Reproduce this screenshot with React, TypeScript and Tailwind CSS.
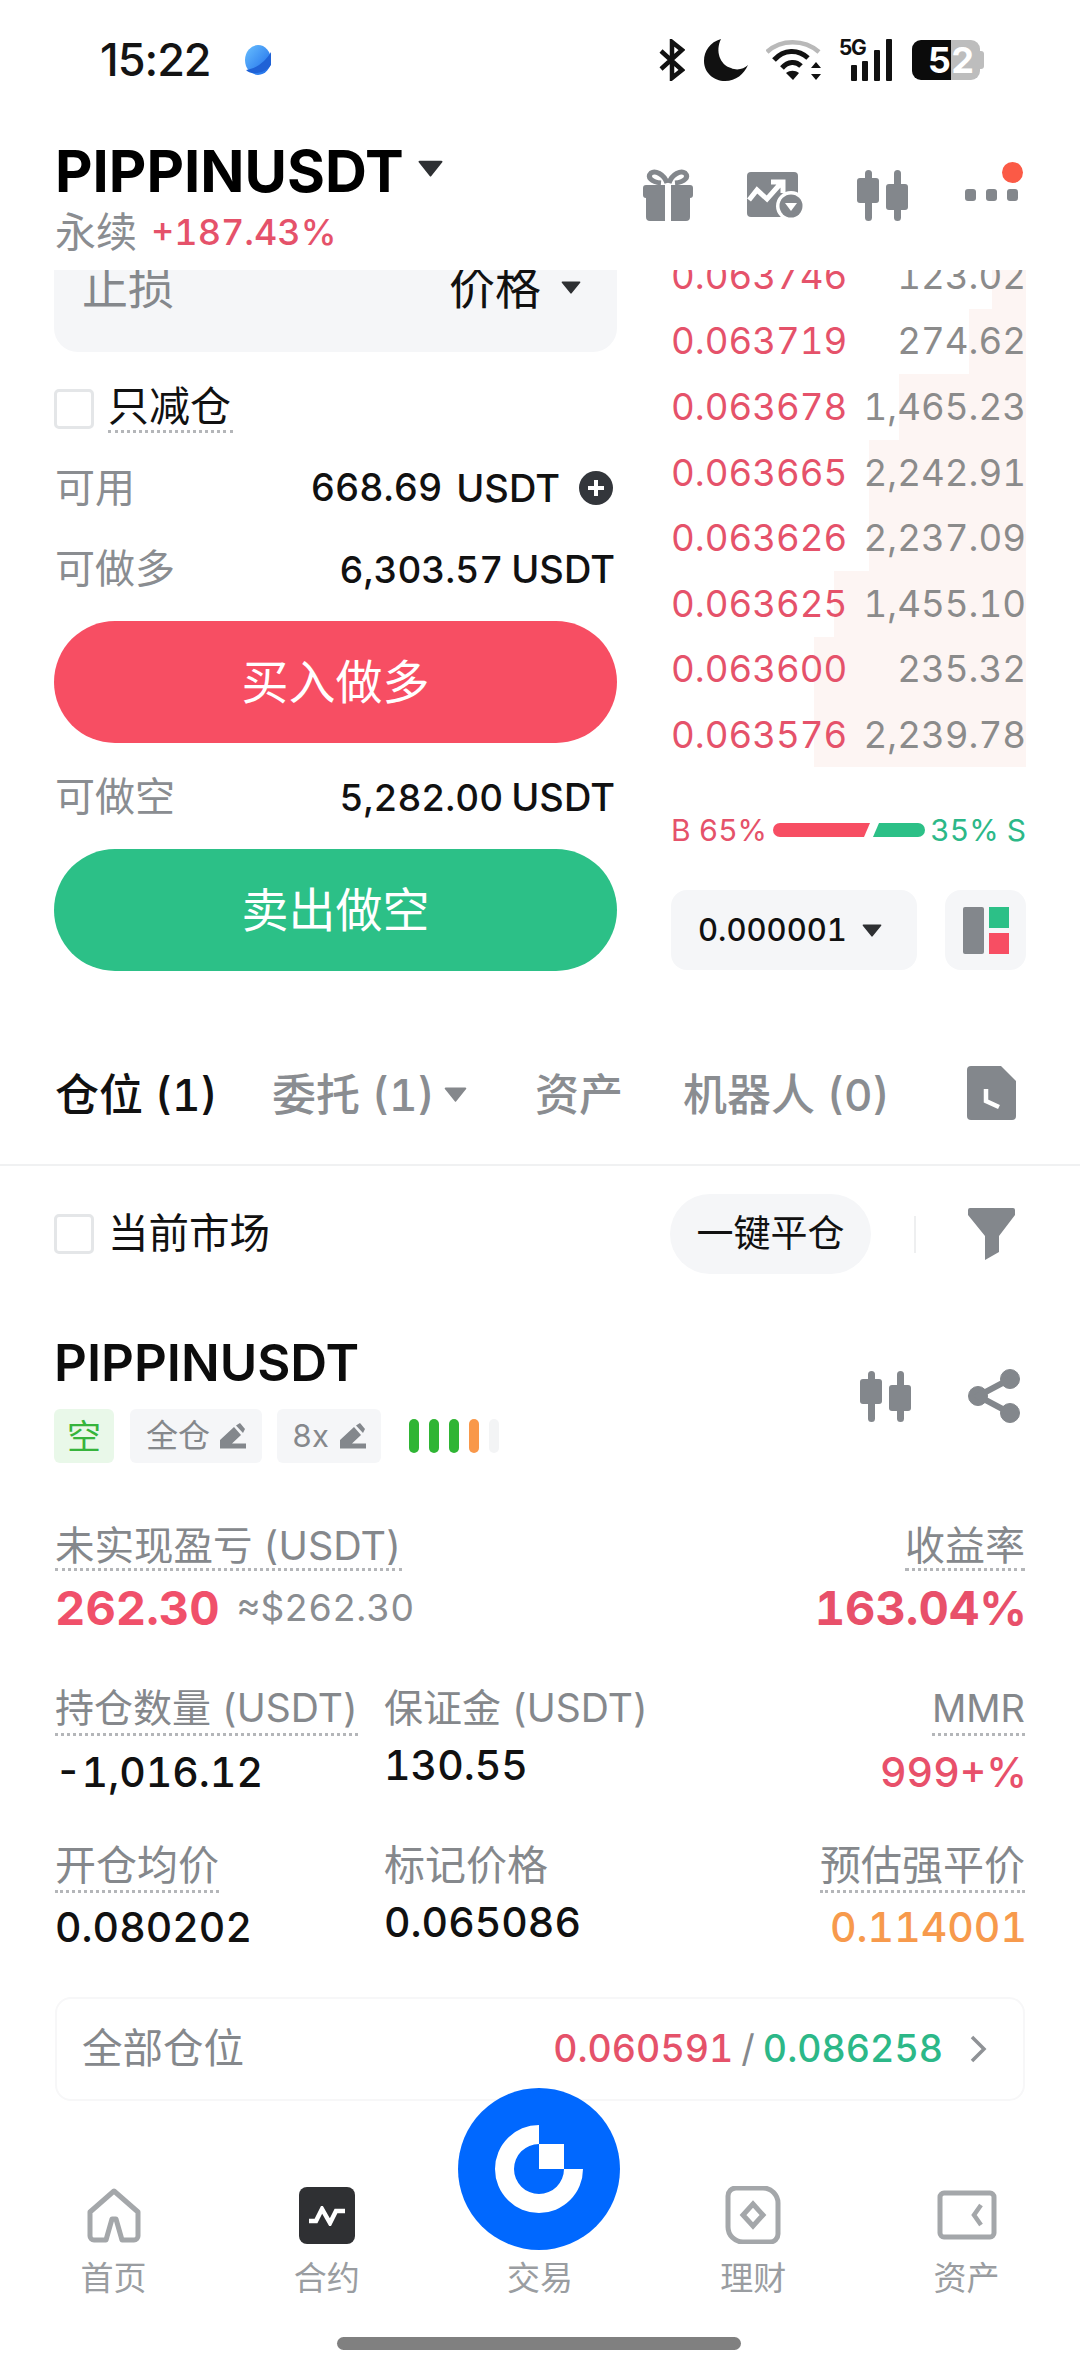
const FONT = 'font-["Inter","Noto_Sans_CJK_SC",sans-serif]';

function Tri({ cls }: { cls: string }) {
  return (
    <svg viewBox="0 0 24 16" className={cls} fill="currentColor">
      <path d="M1.5 0.5h21a1 1 0 0 1 .8 1.6L12.8 15.2a1 1 0 0 1-1.6 0L.7 2.100A1 1 0 0 1 1.500.5z" />
    </svg>
  );
}

function Candles({ cls }: { cls: string }) {
  return (
    <svg viewBox="0 0 51 51" className={cls} fill="#83878c">
      <rect x="8" y="0" width="7" height="51" rx="3.500" />
      <rect x="0" y="8" width="22" height="25" rx="3" />
      <rect x="37" y="0" width="7" height="51" rx="3.500" />
      <rect x="29" y="14" width="22" height="26" rx="3" />
    </svg>
  );
}

function Pencil() {
  return (
    <svg viewBox="0 0 26 26" className="w-[26px] h-[26px]" fill="#83878c">
      <path d="M0 25.500V17L14 4L21 12L12 20.500H26V25.500Z" />
      <path d="M16 2.500L20 0L25 6L23 10Z" />
    </svg>
  );
}

function Check() {
  return <div className="w-[40px] h-[40px] rounded-[5px] border-[3px] border-[#e4e6e8] bg-white shrink-0" />;
}

function Dot({ children, cls = "" }: { children: React.ReactNode; cls?: string }) {
  return <span className={`inline-block border-b-[3px] border-dotted border-[#b4b6b9] ${cls}`}>{children}</span>;
}

const books: [string, string, string][] = [
  ["0.063746", "123.02", "w-[34px]"],
  ["0.063719", "274.62", "w-[57px]"],
  ["0.063678", "1,465.23", "w-[127px]"],
  ["0.063665", "2,242.91", "w-[157px]"],
  ["0.063626", "2,237.09", "w-[157px]"],
  ["0.063625", "1,455.10", "w-[192px]"],
  ["0.063600", "235.32", "w-[212px]"],
  ["0.063576", "2,239.78", "w-[212px]"],
];

function BookRow({ p, a, w }: { p: string; a: string; w: string }) {
  return (
    <div className="relative h-[65.6px] flex items-center justify-between">
      <div className={`absolute right-0 top-0 bottom-0 bg-[#fdf5f3] ${w}`} />
      <span className="relative text-[#e5526a]">{p}</span>
      <span className="relative text-[#8b8b8b]">{a}</span>
    </div>
  );
}

function Nav({ label, children }: { label: string; children?: React.ReactNode }) {
  return (
    <div className="w-[213px] flex flex-col items-center">
      <div className="h-[58px] flex items-end justify-center">{children}</div>
      <div className="mt-[12px] text-[33px] leading-[44px] text-[#9a9da1]">{label}</div>
    </div>
  );
}

export default function App() {
  return (
    <div className={`relative w-[1080px] h-[2374px] bg-white overflow-hidden tabular-nums ${FONT}`}>
      {/* status bar */}
      <div className="h-[120px] flex items-center pl-[100px] pr-[94px] justify-between">
        <div className="flex items-center">
          <span className="normal-nums text-[45px] leading-[44px] font-medium text-[#141414] tracking-[-1px] w-[144px]">15:22</span>
          <svg viewBox="0 0 28 30" className="w-[28px] h-[30px]">
            <defs>
              <linearGradient id="gg" x1="0" y1="0" x2="1" y2="1">
                <stop offset="0" stopColor="#69c0ff" />
                <stop offset="1" stopColor="#1967e8" />
              </linearGradient>
            </defs>
            <ellipse cx="14" cy="15" rx="13" ry="15" fill="url(#gg)" />
            <path d="M2 25 C12 24 22 16 27 7 L27 20 C22 28 8 31 2 25z" fill="#1f62d6" />
          </svg>
        </div>
        <div className="flex items-center">
          <svg viewBox="0 0 26 42" className="w-[26px] h-[42px]" fill="none" stroke="#111" strokeWidth="4.500">
            <path d="M2 12L23 31L13 39V3L23 11L2 30" />
          </svg>
          <svg viewBox="0 0 44 42" className="w-[44px] h-[42px] ml-[19px]" fill="#111">
            <path d="M17 0C6 3 0 12 0 22c0 12 10 20 21 20 11 0 19-7 23-16-4 4-11 6-17 3C16 26 11 12 17 0z" />
          </svg>
          <svg viewBox="0 0 56 42" className="w-[56px] h-[42px] ml-[18px]" fill="none">
            <path d="M1 13C15 0 38 0 53 13" stroke="#b9b9b9" strokeWidth="4.500" />
            <path d="M8 21C18 10 32 10 42 19" stroke="#111" strokeWidth="5" />
            <path d="M16 29C22 22 30 22 35 27" stroke="#111" strokeWidth="5" />
            <path d="M20 34L27 41L33 34C29 31 24 31 20 34z" fill="#111" />
            <path d="M50 23l5 6H45zM50 41l5-6H45z" fill="#111" />
          </svg>
          <div className="relative w-[54px] h-[42px] ml-[17px]">
            <span className="absolute left-0 -top-[3px] text-[21px] leading-[24px] font-bold tracking-[-1.500px] text-[#111]">5G</span>
            <svg viewBox="0 0 54 42" className="w-[54px] h-[42px]" fill="#111">
              <rect x="12" y="26" width="6" height="16" rx="1" />
              <rect x="23" y="22" width="6" height="20" rx="1" />
              <rect x="35" y="11" width="6" height="31" rx="1" />
              <rect x="47" y="0" width="6" height="42" rx="1" />
            </svg>
          </div>
          <div className="relative w-[74px] h-[40px] ml-[19px] flex text-[36px] leading-[40px] font-bold text-white">
            <div className="w-[39px] bg-[#0b0b0b] rounded-l-[9px] pl-[16px]">5</div>
            <div className="w-[29px] bg-[#bdbdbd] rounded-r-[9px]">2</div>
            <div className="w-[4px] h-[18px] mt-[11px] bg-[#bdbdbd] rounded-r-[3px]" />
          </div>
        </div>
      </div>

      {/* header */}
      <div className="h-[150px] pl-[55px] pr-[61px] flex items-start justify-between">
        <div>
          <div className="flex items-center h-[60px] mt-[21px]">
            <span className="text-[58px] leading-[60px] font-bold text-black">PIPPINUSDT</span>
            <Tri cls="w-[25px] h-[17px] ml-[14px] -mt-[6px] text-[#2e3033]" />
          </div>
          <div className="flex items-center h-[44px] mt-[9px]">
            <span className="text-[41px] leading-[44px] text-[#8a8d91]">永续</span>
            <span className="ml-[14px] text-[36px] leading-[44px] font-medium text-[#e5526a]">+187.43%</span>
          </div>
        </div>
        <div className="flex items-center mt-[49px] h-[52px]">
          <svg viewBox="0 0 50 52" className="w-[50px] h-[52px]" fill="#83878c">
            <path d="M24 14C21 5 12 1 8 4C4 8 8 13 18 14" fill="none" stroke="#83878c" strokeWidth="5" />
            <path d="M26 14C29 5 38 1 42 4C46 8 42 13 32 14" fill="none" stroke="#83878c" strokeWidth="5" />
            <path d="M3 16H22V29H3a3 3 0 0 1-3-3V19a3 3 0 0 1 3-3zM28 16H47a3 3 0 0 1 3 3V26a3 3 0 0 1-3 3H28z" />
            <path d="M3 29H22V52H7a4 4 0 0 1-4-4zM28 29H47V48a4 4 0 0 1-4 4H28z" />
          </svg>
          <svg viewBox="0 0 56 46" className="w-[56px] h-[46px] ml-[54px]">
            <rect x="0" y="0" width="51" height="45" rx="4" fill="#83878c" />
            <path d="M2 28L10 18L20 27L35 10M24 10H36V21" stroke="#fff" strokeWidth="5" fill="none" />
            <circle cx="44" cy="34" r="15" fill="#fff" />
            <circle cx="44" cy="34" r="11.500" fill="#83878c" />
            <path d="M38 31H50L44 39z" fill="#fff" />
          </svg>
          <Candles cls="w-[51px] h-[51px] ml-[54px]" />
          <div className="relative w-[54px] h-[52px] ml-[57px]">
            <div className="absolute left-0 bottom-[20px] flex gap-[10px]">
              <div className="w-[11px] h-[12px] rounded-[3px] bg-[#83878c]" />
              <div className="w-[11px] h-[12px] rounded-[3px] bg-[#83878c]" />
              <div className="w-[11px] h-[12px] rounded-[3px] bg-[#83878c]" />
            </div>
            <div className="absolute right-[-4px] -top-[7px] w-[21px] h-[21px] rounded-full bg-[#fb5a46]" />
          </div>
        </div>
      </div>

      {/* trade panel */}
      <div className="h-[701px] pl-[54px] flex">
        <div className="w-[563px] shrink-0">
          <div className="h-[82px] bg-[#f5f6f8] rounded-b-[24px] overflow-hidden flex items-start justify-between pl-[28px] pr-[36px]">
            <span className="-mt-[7px] text-[46px] leading-[48px] text-[#85888c]">止损</span>
            <div className="flex items-center -mt-[7px]">
              <span className="text-[46px] leading-[48px] text-[#111]">价格</span>
              <Tri cls="w-[20px] h-[13px] ml-[20px] text-[#2e3033]" />
            </div>
          </div>
          <div className="flex items-start mt-[37px] h-[60px]">
            <Check />
            <div className="ml-[14px] -mt-[7px]">
              <Dot cls="text-[41px] leading-[48px] text-[#111] pr-[2px]">只减仓</Dot>
            </div>
          </div>
          <div className="flex items-center justify-between h-[60px] mt-[9px]">
            <span className="text-[40px] text-[#8a8d91] pl-[1px]">可用</span>
            <div className="flex items-center text-[#111] font-medium">
              <span className="text-[37.500px]">668.69</span>
              <span className="text-[38px] ml-[14px]">USDT</span>
              <div className="w-[34px] h-[34px] rounded-full bg-[#33363b] ml-[19px] mr-[4px] flex items-center justify-center">
                <svg viewBox="0 0 20 20" className="w-[20px] h-[20px]" stroke="#fff" strokeWidth="4"><path d="M10 2v16M2 10h16" /></svg>
              </div>
            </div>
          </div>
          <div className="flex items-center justify-between h-[60px] mt-[21px]">
            <span className="text-[40px] text-[#8a8d91] pl-[1px]">可做多</span>
            <div className="text-[#111] font-medium text-[37px] pr-[2px]">6,303.57<span className="ml-[8px] text-[38px]">USDT</span></div>
          </div>
          <div className="h-[122px] mt-[22px] rounded-full bg-[#f74e63] flex items-center justify-center text-[47px] text-white font-normal">买入做多</div>
          <div className="flex items-center justify-between h-[60px] mt-[24px]">
            <span className="text-[40px] text-[#8a8d91] pl-[1px]">可做空</span>
            <div className="text-[#111] font-medium text-[37px] pr-[2px]">5,282.00<span className="ml-[8px] text-[38px]">USDT</span></div>
          </div>
          <div className="h-[122px] mt-[22px] rounded-full bg-[#2cc087] flex items-center justify-center text-[47px] text-white font-normal">卖出做空</div>
        </div>
        <div className="w-[355px] ml-[54px] shrink-0">
          <div className="h-[497px] overflow-hidden">
            <div className="-mt-[27px] text-[36.700px] leading-[44px] font-normal">
              {books.map((b) => <BookRow key={b[0]} p={b[0]} a={b[1]} w={b[2]} />)}
            </div>
          </div>
          <div className="flex items-center justify-between h-[40px] mt-[42px] text-[30px] leading-[40px] pt-[2px]">
            <span className="text-[#e5526a]">B 65%</span>
            <div className="flex items-center">
              <svg viewBox="0 0 152 14" className="w-[152px] h-[14px]">
                <path d="M7 0H97L91 14H7a7 7 0 0 1 0-14z" fill="#f74e63" />
                <path d="M106 0H145a7 7 0 0 1 0 14H100z" fill="#2cc087" />
              </svg>
            </div>
            <span className="text-[#2cb888]">35% S</span>
          </div>
          <div className="flex justify-between mt-[41px]">
            <div className="w-[246px] h-[80px] rounded-[16px] bg-[#f5f6f8] flex items-center pl-[27px]">
              <span className="text-[31px] font-medium text-[#111]">0.000001</span>
              <Tri cls="w-[22px] h-[13px] ml-[14px] text-[#2e3033]" />
            </div>
            <div className="w-[81px] h-[80px] rounded-[16px] bg-[#f5f6f8] flex items-center justify-center">
              <svg viewBox="0 0 46 47" className="w-[46px] h-[47px]">
                <rect x="0" y="0" width="21" height="47" rx="2" fill="#83878c" />
                <rect x="26" y="0" width="20" height="21" fill="#2cc087" />
                <rect x="26" y="26" width="20" height="21" fill="#f74e63" />
              </svg>
            </div>
          </div>
        </div>
      </div>

      {/* tabs */}
      <div className="h-[195px] border-b-2 border-[#f0f1f2] pl-[55px] pr-[64px] flex items-center justify-between pt-[54px]">
        <div className="flex items-center text-[44px] leading-[56px] font-medium text-[#8a8d91]">
          <span className="text-[#111] w-[217px]">仓位 (1)</span>
          <span className="w-[172px]">委托 (1)</span>
          <Tri cls="w-[23px] h-[15px] text-[#85888c]" />
          <span className="ml-[68px] w-[148px]">资产</span>
          <span>机器人 (0)</span>
        </div>
        <svg viewBox="0 0 49 54" className="w-[49px] h-[54px] -mt-[4px]">
          <path d="M4 0H34L49 15V50a4 4 0 0 1-4 4H4a4 4 0 0 1-4-4V4a4 4 0 0 1 4-4z" fill="#83878c" />
          <path d="M19 23V35L32 41" stroke="#fff" strokeWidth="4.500" fill="none" />
        </svg>
      </div>

      {/* filter row */}
      <div className="h-[108px] mt-[14px] pl-[54px] pr-[65px] flex items-center">
        <Check />
        <span className="ml-[14px] text-[40.500px] text-[#111]">当前市场</span>
        <div className="ml-auto w-[201px] h-[80px] rounded-full bg-[#f5f6f8] flex items-center justify-center text-[37px] text-[#111]">一键平仓</div>
        <div className="w-[2px] h-[37px] bg-[#eeeff0] ml-[43px]" />
        <svg viewBox="0 0 47 52" className="w-[47px] h-[52px] ml-[52px]" fill="#83878c">
          <path d="M2 0H45a2 2 0 0 1 2 2V7L31 28V44L17 52V28L0 7V2a2 2 0 0 1 2-2z" />
        </svg>
      </div>

      {/* position header */}
      <div className="mt-[45px] pl-[54px] pr-[60px] flex justify-between items-start">
        <div>
          <div className="text-[51px] leading-[60px] font-semibold text-[#0c0c0c]">PIPPINUSDT</div>
          <div className="flex items-center mt-[16px] h-[54px]">
            <div className="w-[60px] h-[54px] rounded-[6px] bg-[#e9f8e9] flex items-center justify-center text-[34px] text-[#36b43c]">空</div>
            <div className="w-[132px] h-[54px] ml-[16px] rounded-[6px] bg-[#f5f6f8] flex items-center justify-center text-[32px] text-[#85888c]">全仓<span className="ml-[10px]"><Pencil /></span></div>
            <div className="w-[104px] h-[54px] ml-[15px] rounded-[6px] bg-[#f5f6f8] flex items-center justify-center text-[31px] text-[#85888c]">8x<span className="ml-[11px]"><Pencil /></span></div>
            <div className="flex ml-[28px] gap-[10px]">
              <div className="w-[10px] h-[34px] rounded-full bg-[#2fb534]" />
              <div className="w-[10px] h-[34px] rounded-full bg-[#2fb534]" />
              <div className="w-[10px] h-[34px] rounded-full bg-[#2fb534]" />
              <div className="w-[10px] h-[34px] rounded-full bg-[#f9984a]" />
              <div className="w-[10px] h-[34px] rounded-full bg-[#f3f4f5]" />
            </div>
          </div>
        </div>
        <div className="flex items-center mt-[36px]">
          <Candles cls="w-[51px] h-[51px]" />
          <svg viewBox="0 0 52 54" className="w-[52px] h-[54px] ml-[57px]" fill="#83878c" stroke="#83878c">
            <circle cx="42" cy="10" r="9.500" />
            <circle cx="10" cy="27" r="9.500" />
            <circle cx="42" cy="44" r="9.500" />
            <path d="M42 10L10 27L42 44" fill="none" strokeWidth="6" />
          </svg>
        </div>
      </div>

      {/* metrics */}
      <div className="mt-[61px] px-[55px] text-[38px] text-[#85888c]">
        <div className="flex justify-between items-start h-[114px]">
          <div className="flex flex-col items-start">
            <Dot cls="leading-[44px] text-[39.500px]">未实现盈亏 (USDT)</Dot>
            <div className="flex items-center mt-[7px]">
              <span className="text-[47px] font-bold leading-[60px] text-[#f0506a]">262.30</span>
              <span className="ml-[17px] text-[37px] leading-[46px] text-[#8a8d91]">≈$262.30</span>
            </div>
          </div>
          <div className="flex flex-col items-end">
            <Dot cls="leading-[44px] text-[40px]">收益率</Dot>
            <span className="mt-[7px] -mr-[2px] text-[47px] font-bold leading-[60px] text-[#e8506a]">163.04%</span>
          </div>
        </div>
        <div className="grid grid-cols-[329px_1fr_auto] h-[157px] mt-[45px]">
          <div className="flex flex-col items-start">
            <Dot cls="leading-[50px] text-[39px]">持仓数量 (USDT)</Dot>
            <div className="mt-[13px] text-[41px] leading-[46px] font-medium text-[#111]">-1,016.12</div>
          </div>
          <div>
            <div className="leading-[50px] text-[39px]">保证金 (USDT)</div>
            <div className="mt-[9px] text-[41px] leading-[46px] font-medium text-[#111]">130.55</div>
          </div>
          <div className="flex flex-col items-end">
            <Dot cls="leading-[50px] text-[38px]">MMR</Dot>
            <div className="mt-[13px] -mr-[2px] text-[41px] leading-[46px] font-medium text-[#e8506a]">999+%</div>
          </div>
        </div>
        <div className="grid grid-cols-[329px_1fr_auto] h-[116px]">
          <div className="flex flex-col items-start">
            <Dot cls="leading-[50px] text-[41px]">开仓均价</Dot>
            <div className="mt-[11px] text-[41px] leading-[46px] font-medium text-[#111]">0.080202</div>
          </div>
          <div>
            <div className="leading-[50px] text-[41px]">标记价格</div>
            <div className="mt-[9px] text-[41px] leading-[46px] font-medium text-[#111]">0.065086</div>
          </div>
          <div className="flex flex-col items-end">
            <Dot cls="leading-[50px] text-[41px]">预估强平价</Dot>
            <div className="mt-[11px] -mr-[2px] text-[41px] leading-[46px] font-medium text-[#f79a4c]">0.114001</div>
          </div>
        </div>
      </div>

      {/* all positions */}
      <div className="mt-[41px] mx-[55px] h-[104px] rounded-[16px] border-2 border-[#f7f7f8] flex items-center pl-[25px] pr-[36px]">
        <span className="text-[40.500px] text-[#85888c]">全部仓位</span>
        <div className="ml-auto flex items-center text-[37.500px] font-medium">
          <span className="text-[#e5526a]">0.060591</span>
          <span className="text-[#85888c] mx-[8px] font-normal">/</span>
          <span className="text-[#2cb888]">0.086258</span>
          <svg viewBox="0 0 18 28" className="w-[18px] h-[28px] ml-[26px]" fill="none" stroke="#8f9296" strokeWidth="3.500"><path d="M3 2l12 12L3 26" /></svg>
        </div>
      </div>

      {/* bottom nav */}
      <div className="mt-[85px] px-[7px] flex justify-between">
        <Nav label="首页">
          <svg viewBox="0 0 56 56" className="w-[56px] h-[56px]" fill="none" stroke="#a4a7aa" strokeWidth="5" strokeLinejoin="round">
            <path d="M28 3L52 24V48a4 4 0 0 1-4 4H36L30 31H26L20 52H8a4 4 0 0 1-4-4V24z" />
          </svg>
        </Nav>
        <Nav label="合约">
          <div className="w-[56px] h-[57px] rounded-[8px] bg-[#2f3033] flex items-center justify-center">
            <svg viewBox="0 0 36 20" className="w-[36px] h-[20px]" fill="none" stroke="#fff" strokeWidth="4.500"><path d="M0 15H7L13 3L21 17L27 5H36" /></svg>
          </div>
        </Nav>
        <Nav label="交易" />
        <Nav label="理财">
          <svg viewBox="0 0 56 58" className="w-[56px] h-[58px]" fill="none" stroke="#a4a7aa" strokeWidth="5">
            <path d="M3 10a8 8 0 0 1 8-8H38a15 15 0 0 1 15 15V48a8 8 0 0 1-8 8H18A15 15 0 0 1 3 41z" />
            <path d="M28 18L38 29L28 40L18 29z" />
          </svg>
        </Nav>
        <Nav label="资产">
          <svg viewBox="0 0 60 50" className="w-[60px] h-[50px] mb-[4px]" fill="none" stroke="#a4a7aa" strokeWidth="5">
            <rect x="3" y="3" width="54" height="44" rx="4" />
            <path d="M44 15L37 25L44 35" strokeWidth="4.500" />
          </svg>
        </Nav>
      </div>

      {/* home indicator */}
      <div className="absolute left-[337px] top-[2337px] w-[404px] h-[13px] rounded-full bg-[#808080]" />

      {/* center trade button */}
      <div className="absolute left-[458px] top-[2088px] w-[162px] h-[162px] rounded-full bg-[#0068ff] flex items-center justify-center">
        <svg viewBox="-46 -46 92 92" className="w-[92px] h-[92px]" fill="#fff">
          <path d="M44 0A44 44 0 1 1 0 -44V-25A25 25 0 1 0 25 0Z" />
          <rect x="0" y="-25" width="25" height="25" />
        </svg>
      </div>
    </div>
  );
}
